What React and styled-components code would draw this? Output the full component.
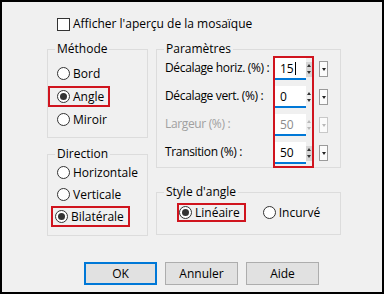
import styled, { createGlobalStyle } from "styled-components";

const GlobalStyle = createGlobalStyle`
  html, body {
    margin: 0;
    padding: 0;
    background: #f0f0f0;
  }
  body {
    font-family: "Open Sans", "Noto Sans", sans-serif;
    font-size: 12px;
    color: #000;
  }
  * {
    box-sizing: border-box;
  }
`;

const Dialog = styled.div`
  width: 384px;
  height: 294px;
  border: 2px solid #000;
  background: #f0f0f0;
  display: flex;
  flex-direction: column;
  padding-top: 14px;
`;

const CheckRow = styled.label`
  display: flex;
  align-items: center;
  gap: 3px;
  height: 16px;
  line-height: 16px;
  margin-left: 55px;
`;

const CheckBox = styled.span`
  width: 13px;
  height: 13px;
  border: 1px solid #333;
  background: #fff;
  flex: none;
`;

const Columns = styled.div`
  display: flex;
  gap: 8px;
  margin-top: 9px;
  padding-left: 45px;
`;

const Column = styled.div`
  display: flex;
  flex-direction: column;
  width: ${(p) => p.$w}px;
  gap: ${(p) => p.$gap}px;
`;

const Group = styled.fieldset`
  margin: 0;
  padding: 0;
  min-width: 0;
  border: 1px solid #dcdcdc;
  height: ${(p) => p.$h}px;
`;

const Legend = styled.legend`
  margin-left: 7px;
  padding: 0 2px;
  height: 16px;
  line-height: 16px;
`;

const OptionList = styled.div`
  display: flex;
  flex-direction: ${(p) => (p.$row ? "row" : "column")};
  align-items: flex-start;
  gap: ${(p) => p.$gap || 0}px;
  margin-top: ${(p) => p.$mt || 0}px;
  padding-left: ${(p) => p.$pl || 0}px;
`;

const Option = styled.label`
  display: flex;
  align-items: center;
  gap: ${(p) => p.$gap ?? 3}px;
  height: ${(p) => p.$h || 21}px;
  border: 2px solid ${(p) => (p.$marked ? "#d0141e" : "transparent")};
  padding: 0 ${(p) => p.$pr ?? 4}px 0 ${(p) => p.$pl ?? 7}px;
  margin-left: ${(p) => p.$ml || 0}px;
  white-space: nowrap;
`;

const Radio = styled.span`
  width: 13px;
  height: 13px;
  border-radius: 50%;
  border: 1px solid #333;
  background: #fff;
  flex: none;
  display: flex;
  align-items: center;
  justify-content: center;

  &::after {
    content: "";
    width: 7px;
    height: 7px;
    border-radius: 50%;
    background: ${(p) => (p.$on ? "#333" : "transparent")};
  }
`;

const ParamBody = styled.div`
  display: flex;
  margin-top: -1px;
  padding-left: 8px;
`;

const Stack = styled.div`
  display: flex;
  flex-direction: column;
  gap: 6px;
  padding-top: 2px;
  width: ${(p) => (p.$w ? `${p.$w}px` : "auto")};
  margin-left: ${(p) => p.$ml || 0}px;
`;

const FieldLabel = styled.div`
  height: 22px;
  line-height: 20px;
  letter-spacing: -0.35px;
  color: ${(p) => (p.$disabled ? "#a0a0a0" : "#000")};
  white-space: nowrap;
`;

const Marked = styled.div`
  display: flex;
  flex-direction: column;
  gap: 6px;
  border: 2px solid #d0141e;
  padding-bottom: 2px;
  width: 41px;
`;

const SpinRow = styled.div`
  display: flex;
  align-items: center;
  height: 22px;
`;

const Input = styled.div`
  width: 31px;
  height: 22px;
  background: #fff;
  border-bottom: 2px solid #0078d7;
  padding-left: 5px;
  display: flex;
  align-items: center;
  color: ${(p) => (p.$disabled ? "#8c8c8c" : "#000")};
`;

const Caret = styled.span`
  width: 1px;
  height: 13px;
  background: #000;
  margin-left: 1px;
`;

const Spin = styled.div`
  width: 6px;
  height: 15px;
  display: flex;
  flex-direction: column;
  background: ${(p) => (p.$hot ? "#d6d6d6" : "#f0f0f0")};
`;

const SpinHalf = styled.span`
  flex: 1;
  display: flex;
  align-items: center;
  justify-content: center;

  &::after {
    content: "";
    border-left: 2.5px solid transparent;
    border-right: 2.5px solid transparent;
    ${(p) => (p.$down ? "border-top" : "border-bottom")}: 3px solid
      ${(p) => (p.$disabled ? "#b8b8b8" : "#333")};
  }
`;

const DropRow = styled.div`
  height: 22px;
  display: flex;
  align-items: center;
`;

const DropButton = styled.div`
  width: 9px;
  height: 16px;
  background: #fbfbfb;
  border: 1px solid ${(p) => (p.$disabled ? "#c8c8c8" : "#9a9a9a")};
  display: flex;
  align-items: center;
  justify-content: center;

  &::after {
    content: "";
    border-left: 2.5px solid transparent;
    border-right: 2.5px solid transparent;
    border-top: 3px solid ${(p) => (p.$disabled ? "#b8b8b8" : "#222")};
  }
`;

const Buttons = styled.div`
  display: flex;
  gap: 8px;
  margin-top: 26px;
  padding-left: 82px;
`;

const Button = styled.button`
  width: 73px;
  height: 23px;
  font: inherit;
  color: #000;
  background: #e1e1e1;
  border: ${(p) => (p.$default ? "2px solid #0078d7" : "1px solid #adadad")};
  padding: 0;
`;

const fields = [
  { label: "Décalage horiz. (%) :", value: "15", caret: true, hot: true },
  { label: "Décalage vert. (%) :", value: "0" },
  { label: "Largeur (%) :", value: "50", disabled: true },
  { label: "Transition (%) :", value: "50", hot: true },
];

function App() {
  return (
    <Dialog>
      <GlobalStyle />
      <CheckRow>
        <CheckBox />
        Afficher l'aperçu de la mosaïque
      </CheckRow>

      <Columns>
        <Column $w={101} $gap={8}>
          <Group $h={97}>
            <Legend>Méthode</Legend>
            <OptionList $mt={6} $gap={2}>
              <Option>
                <Radio />
                Bord
              </Option>
              <Option $marked>
                <Radio $on />
                Angle
              </Option>
              <Option>
                <Radio />
                Miroir
              </Option>
            </OptionList>
          </Group>
          <Group $h={90}>
            <Legend>Direction</Legend>
            <OptionList $gap={1}>
              <Option>
                <Radio />
                Horizontale
              </Option>
              <Option>
                <Radio />
                Verticale
              </Option>
              <Option $marked $ml={3} $pl={2}>
                <Radio $on />
                Bilatérale
              </Option>
            </OptionList>
          </Group>
        </Column>

        <Column $w={185} $gap={16}>
          <Group $h={127}>
            <Legend>Paramètres</Legend>
            <ParamBody>
              <Stack $w={108}>
                {fields.map((f) => (
                  <FieldLabel key={f.label} $disabled={f.disabled}>
                    {f.label}
                  </FieldLabel>
                ))}
              </Stack>
              <Marked>
                {fields.map((f) => (
                  <SpinRow key={f.label}>
                    <Input $disabled={f.disabled}>
                      {f.value}
                      {f.caret && <Caret />}
                    </Input>
                    <Spin $hot={f.hot}>
                      <SpinHalf $disabled={f.disabled} />
                      <SpinHalf $down $disabled={f.disabled} />
                    </Spin>
                  </SpinRow>
                ))}
              </Marked>
              <Stack $ml={5}>
                {fields.map((f) => (
                  <DropRow key={f.label}>
                    <DropButton $disabled={f.disabled} />
                  </DropRow>
                ))}
              </Stack>
            </ParamBody>
          </Group>
          <Group $h={51}>
            <Legend>Style d'angle</Legend>
            <OptionList $row $mt={3} $pl={20} $gap={15}>
              <Option $marked $h={19} $pl={0} $pr={4}>
                <Radio $on />
                Linéaire
              </Option>
              <Option $h={19} $pl={0}>
                <Radio />
                Incurvé
              </Option>
            </OptionList>
          </Group>
        </Column>
      </Columns>

      <Buttons>
        <Button $default>OK</Button>
        <Button>Annuler</Button>
        <Button>Aide</Button>
      </Buttons>
    </Dialog>
  );
}

export default App;
